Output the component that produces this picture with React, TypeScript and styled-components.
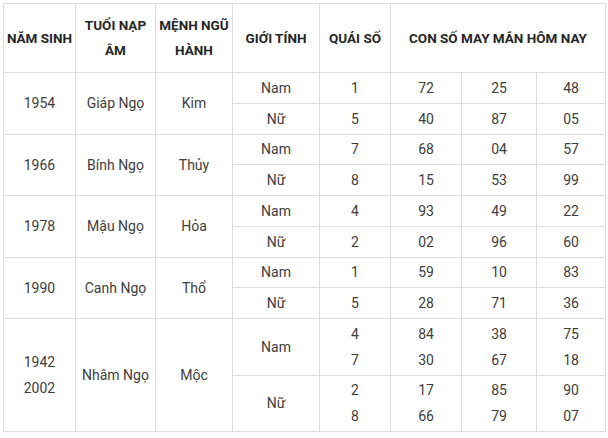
import React from "react";
import styled, { createGlobalStyle } from "styled-components";

const Global = createGlobalStyle`
  html, body { margin: 0; padding: 0; background: #fff; }
  body { font-family: Roboto, "Noto Sans", Arial, sans-serif; }
`;

const Wrap = styled.div`
  padding: 3px 0 0 3px;
`;

const Table = styled.table`
  border-collapse: collapse;
  table-layout: fixed;
  width: 602px;
  color: #3d3d3d;
  font-size: 14px;
`;

const Th = styled.th`
  border: 1px solid #ddd;
  font-weight: 700;
  font-size: 13.5px;
  color: #262626;
  line-height: 25px;
  padding: 0 2px;
  text-align: center;
  vertical-align: middle;
`;

const Td = styled.td`
  border: 1px solid #ddd;
  padding: 0 2px;
  text-align: center;
  vertical-align: middle;
  line-height: 26px;
  font-weight: 400;
`;

const HeadRow = styled.tr`
  height: 69px;
`;

const Row = styled.tr<{ $h?: number }>`
  height: ${(p) => p.$h ?? 30.75}px;
`;

const widths = [72, 80, 77, 87, 71, 71, 75, 69];

type Sub = { g: string; q: string[]; n: string[][] };
type Group = { years: string[]; tuoi: string; menh: string; subs: Sub[]; h: number[] };

const data: Group[] = [
  { years: ["1954"], tuoi: "Giáp Ngọ", menh: "Kim", h: [30.75, 30.75], subs: [
    { g: "Nam", q: ["1"], n: [["72", "25", "48"]] },
    { g: "Nữ", q: ["5"], n: [["40", "87", "05"]] },
  ] },
  { years: ["1966"], tuoi: "Bính Ngọ", menh: "Thủy", h: [30.75, 30.75], subs: [
    { g: "Nam", q: ["7"], n: [["68", "04", "57"]] },
    { g: "Nữ", q: ["8"], n: [["15", "53", "99"]] },
  ] },
  { years: ["1978"], tuoi: "Mậu Ngọ", menh: "Hỏa", h: [30.75, 30.75], subs: [
    { g: "Nam", q: ["4"], n: [["93", "49", "22"]] },
    { g: "Nữ", q: ["2"], n: [["02", "96", "60"]] },
  ] },
  { years: ["1990"], tuoi: "Canh Ngọ", menh: "Thổ", h: [30.75, 30.75], subs: [
    { g: "Nam", q: ["1"], n: [["59", "10", "83"]] },
    { g: "Nữ", q: ["5"], n: [["28", "71", "36"]] },
  ] },
  { years: ["1942", "2002"], tuoi: "Nhâm Ngọ", menh: "Mộc", h: [56.5, 56.5], subs: [
    { g: "Nam", q: ["4", "7"], n: [["84", "38", "75"], ["30", "67", "18"]] },
    { g: "Nữ", q: ["2", "8"], n: [["17", "85", "90"], ["66", "79", "07"]] },
  ] },
];

const Lines: React.FC<{ items: string[] }> = ({ items }) => (
  <>
    {items.map((t, i) => (
      <React.Fragment key={i}>
        {i > 0 && <br />}
        {t}
      </React.Fragment>
    ))}
  </>
);

export default function App() {
  return (
    <>
      <Global />
      <Wrap>
        <Table>
          <colgroup>
            {widths.map((w, i) => (
              <col key={i} style={{ width: w }} />
            ))}
          </colgroup>
          <thead>
            <HeadRow>
              <Th>NĂM SINH</Th>
              <Th>TUỔI NẠP ÂM</Th>
              <Th>MỆNH NGŨ HÀNH</Th>
              <Th>GIỚI TÍNH</Th>
              <Th>QUÁI SỐ</Th>
              <Th colSpan={3}>CON SỐ MAY MẮN HÔM NAY</Th>
            </HeadRow>
          </thead>
          <tbody>
            {data.map((g, gi) =>
              g.subs.map((s, si) => (
                <Row key={`${gi}-${si}`} $h={g.h[si]}>
                  {si === 0 && (
                    <>
                      <Td rowSpan={2}><Lines items={g.years} /></Td>
                      <Td rowSpan={2}>{g.tuoi}</Td>
                      <Td rowSpan={2}>{g.menh}</Td>
                    </>
                  )}
                  <Td>{s.g}</Td>
                  <Td><Lines items={s.q} /></Td>
                  {[0, 1, 2].map((c) => (
                    <Td key={c}><Lines items={s.n.map((r) => r[c])} /></Td>
                  ))}
                </Row>
              ))
            )}
          </tbody>
        </Table>
      </Wrap>
    </>
  );
}
